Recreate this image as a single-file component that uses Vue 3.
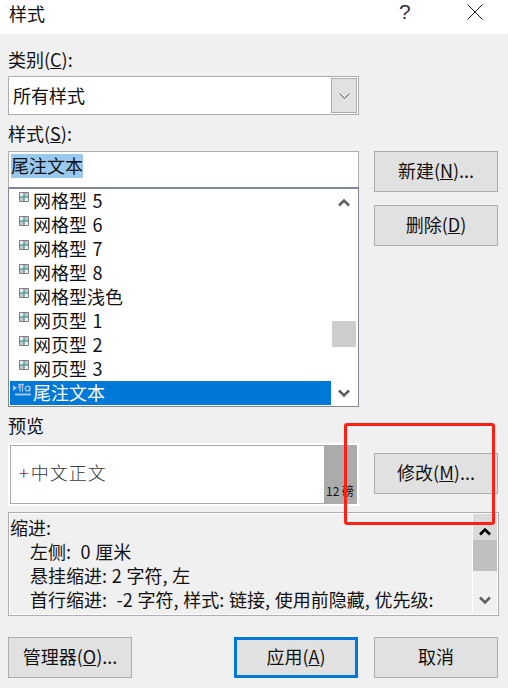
<script setup>
const items = [
  { t: '网格型 5' }, { t: '网格型 6' }, { t: '网格型 7' }, { t: '网格型 8' },
  { t: '网格型浅色' }, { t: '网页型 1' }, { t: '网页型 2' }, { t: '网页型 3' }
]
</script>

<template>
  <div class="dialog">
    <header class="title">
      <span class="title-text">样式</span>
      <span class="help">?</span>
      <svg class="close" width="16" height="16" viewBox="0 0 16 16"><path d="M.5.5l15 15M15.5.5l-15 15" stroke="#222" fill="none"/></svg>
    </header>

    <div class="upper">
      <div class="left">
        <div class="label">类别(<u>C</u>):</div>
        <div class="combo">
          <span class="combo-text">所有样式</span>
          <span class="drop">
            <svg width="11" height="6" viewBox="0 0 11 6"><path d="M.5.5l5 5 5-5" stroke="#555" fill="none"/></svg>
          </span>
        </div>
        <div class="label second">样式(<u>S</u>):</div>
        <div class="input"><span class="sel">尾注文本</span></div>
        <div class="list">
          <div class="rows">
            <div v-for="i in items" :key="i.t" class="row">
              <svg class="ico" width="10" height="10" viewBox="0 0 10 10">
                <path d="M.5.5h9v9h-9z" fill="#c8c8c8" stroke="#808080"/>
                <path d="M1 1h3.5v3.5H1zM5.5 5.5H9V9H5.5z" fill="#efefef"/>
                <path d="M5 .5v9M.5 5h9" stroke="#2f8f8f" fill="none"/>
              </svg>
              <span>{{ i.t }}</span>
            </div>
            <div class="row active">
              <svg class="ico link" width="18" height="13" viewBox="0 0 18 13">
                <path d="M0 2l4 3-4 3z" fill="#a9c4e4"/>
                <path d="M5 1.5h6M7 1.5v7M9.5 1.5v7M5 4h3" stroke="#a9c4e4" stroke-width="1.3" fill="none"/>
                <circle cx="14.5" cy="5.5" r="2.3" fill="none" stroke="#a9c4e4" stroke-width="1.3"/>
                <path d="M16.8 3v5.5" stroke="#a9c4e4" stroke-width="1.3" fill="none"/>
                <path d="M2 11.5h16" stroke="#a9c4e4" stroke-width="2" fill="none"/>
              </svg>
              <span>尾注文本</span>
            </div>
          </div>
          <div class="sbar">
            <svg class="arrow" width="12" height="9" viewBox="0 0 12 9"><path d="M1 7.5l5-5 5 5" stroke="#606060" stroke-width="2.6" fill="none"/></svg>
            <div class="thumb"></div>
            <svg class="arrow down" width="12" height="9" viewBox="0 0 12 9"><path d="M1 1.5l5 5 5-5" stroke="#606060" stroke-width="2.6" fill="none"/></svg>
          </div>
        </div>
        <div class="label third">预览</div>
        <div class="preview">
          <div class="preview-in">
            <div class="preview-text"><span class="plus">+</span>中文正文</div>
            <div class="size"><span>12 磅</span></div>
          </div>
        </div>
      </div>
      <div class="right">
        <button class="btn">新建(<u>N</u>)...</button>
        <button class="btn del">删除(<u>D</u>)</button>
        <button class="btn mod">修改(<u>M</u>)...</button>
      </div>
    </div>

    <div class="desc">
      <div class="desc-in">
        <div class="desc-text">
          <div>缩进:</div>
          <div class="ind">左侧:&nbsp; 0 厘米</div>
          <div class="ind">悬挂缩进: 2 字符, 左</div>
          <div class="ind">首行缩进: &nbsp;-2 字符, 样式: 链接, 使用前隐藏, 优先级:</div>
        </div>
        <div class="dbar">
          <div class="dtop"><svg width="12" height="9" viewBox="0 0 12 9"><path d="M1 7.5l5-5 5 5" stroke="#000" stroke-width="2.6" fill="none"/></svg></div>
          <div class="dthumb"></div>
          <div class="dbot"><svg width="12" height="9" viewBox="0 0 12 9"><path d="M1 1.5l5 5 5-5" stroke="#606060" stroke-width="2.6" fill="none"/></svg></div>
        </div>
      </div>
    </div>

    <footer class="foot">
      <button class="btn">管理器(<u>O</u>)...</button>
      <button class="btn primary">应用(<u>A</u>)</button>
      <button class="btn cancel">取消</button>
    </footer>

    <div class="redbox"></div>
  </div>
</template>

<style>
html, body { margin: 0; background: #f0f0f0; }
</style>

<style scoped>
.dialog {
  position: relative;
  width: 508px;
  height: 688px;
  background: #f0f0f0;
  overflow: hidden;
  font-family: "Noto Sans CJK SC", "Liberation Sans", sans-serif;
  font-size: 18px;
  color: #111;
  box-sizing: border-box;
}
.title {
  height: 34px;
  background: #fff;
  display: flex;
  align-items: flex-start;
  padding-left: 9px;
  box-sizing: border-box;
}
.title-text { line-height: 26px; flex: 1; }
.help { width: 16px; margin-right: 52px; margin-left: -2px; font: 21px/24px "Liberation Sans", sans-serif; color: #333; }
.close { margin: 4px 25px 0 0; flex: none; }
.upper { display: flex; padding: 14px 10px 0 8px; }
.left { width: 351px; flex: none; }
.right { margin-left: 15px; flex: 1; display: flex; flex-direction: column; padding-top: 103px; }
.label { height: 24px; line-height: 22px; }
.second { margin-top: 7px; }
.third { margin-top: 7px; }
.combo {
  margin-top: 4px;
  height: 39px;
  border: 1px solid #adadb3;
  background: #fff;
  box-sizing: border-box;
  display: flex;
  align-items: center;
  padding: 1px 1px 1px 4px;
}
.combo-text { flex: 1; line-height: 24px; padding-bottom: 2px; }
.drop {
  width: 26px;
  height: 35px;
  background: #e1e1e1;
  border: 1px solid #adadad;
  box-sizing: border-box;
  display: flex;
  align-items: center;
  justify-content: center;
}
.input {
  margin-top: 5px;
  height: 36px;
  background: #fff;
  border: 1px solid #adadb3;
  border-bottom: 0;
  box-sizing: border-box;
  padding: 2px 0 0 2px;
}
.sel { display: inline-block; background: #99c9ef; height: 24px; line-height: 22px; vertical-align: top; }
.list {
  height: 220px;
  background: #fff;
  border: 1px solid #828790;
  border-top-width: 2px;
  box-sizing: border-box;
  display: flex;
}
.rows { width: 322px; flex: none; padding-left: 1px; box-sizing: border-box; }
.row {
  height: 24px;
  line-height: 22px;
  display: flex;
  align-items: flex-start;
  padding-left: 23px;
  position: relative;
  word-spacing: 1.5px;
}
.row .ico { position: absolute; left: 9px; top: 3px; }
.row .link { left: 3px; top: 2px; }
.active { background: #0078d7; color: #fff; }
.sbar {
  flex: 1;
  margin-left: 1px;
  margin-right: 2px;
  background: #fff;
  display: flex;
  flex-direction: column;
  align-items: center;
  position: relative;
}
.arrow { margin-top: 9px; }
.thumb { position: absolute; left: 0; right: 0; top: 132px; height: 26px; background: #cdcdcd; }
.down { margin-top: auto; margin-bottom: 8px; }
.preview { margin-top: 5px; height: 63px; background: #fff; padding: 2px; box-sizing: border-box; }
.preview-in { height: 59px; border: 1px solid #ababab; box-sizing: border-box; display: flex; background: #fff; }
.preview-text { flex: 1; padding-left: 8px; line-height: 53px; color: #3a3a3a; font-weight: 300; letter-spacing: 1px; }
.plus { color: #7a2050; margin-right: 1px; }
.size { width: 32px; background: #ababab; color: #111; font: 12px/14px "Noto Sans CJK SC", sans-serif; display: flex; align-items: flex-end; justify-content: flex-end; padding: 0 2px 5px 0; box-sizing: border-box; white-space: nowrap; }
.btn {
  width: 124px;
  height: 41px;
  padding: 0 0 3px;
  margin: 0;
  background: #e1e1e1;
  border: 1px solid #adadad;
  box-sizing: border-box;
  font: inherit;
  color: #111;
  flex: none;
}
.del { margin-top: 13px; }
.mod { margin-top: 207px; }
.desc {
  margin: 6px 9px 0 8px;
  height: 104px;
  border: 1px solid #adadb3;
  box-sizing: border-box;
  padding: 1px;
  background: #fff;
}
.desc-in { height: 100%; display: flex; background: #f0f0f0; }
.desc-text { flex: 1; line-height: 24px; white-space: nowrap; overflow: hidden; padding-top: 1px; word-spacing: 0.7px; }
.ind { padding-left: 20px; }
.dbar { width: 24px; border-left: 1px solid #fff; display: flex; flex-direction: column; }
.dtop { height: 26px; background: #dadada; display: flex; justify-content: center; align-items: center; padding-top: 8px; box-sizing: border-box; }
.dthumb { height: 31px; background: #c0c0c0; }
.dbot { flex: 1; display: flex; justify-content: center; align-items: flex-end; padding-bottom: 9px; }
.foot { margin: 21px 10px 0 8px; display: flex; }
.primary { border: 3px solid #0078d7; margin-left: 102px; }
.cancel { margin-left: 16px; }
.redbox {
  position: absolute;
  left: 344px;
  top: 423px;
  width: 151px;
  height: 102px;
  border: 3px solid #ff2015;
  border-radius: 3px;
  box-sizing: border-box;
}
</style>
